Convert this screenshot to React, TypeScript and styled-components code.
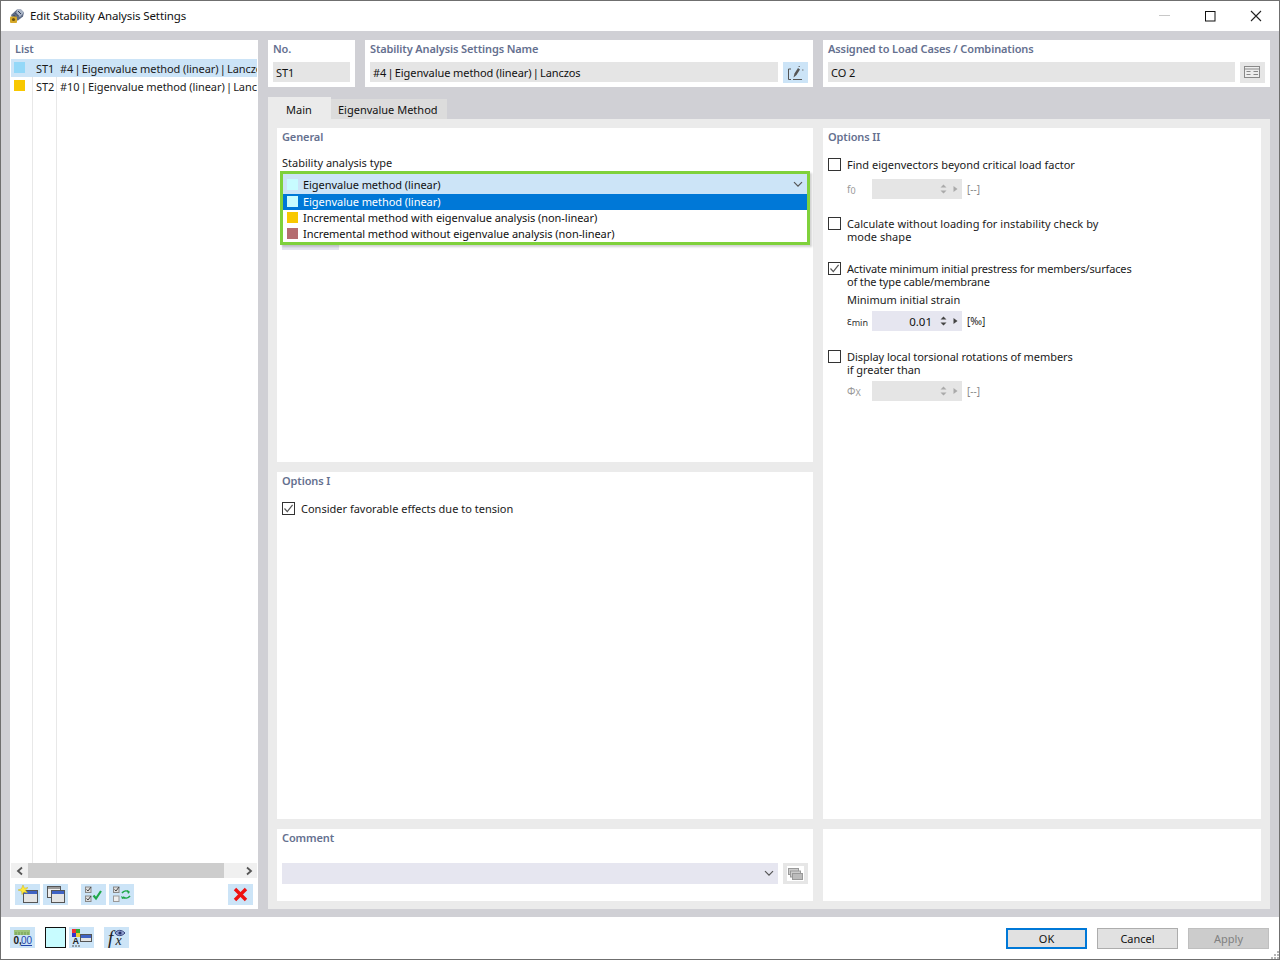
import React from "react";
import styled, { createGlobalStyle } from "styled-components";

const Global = createGlobalStyle`
  html, body { margin: 0; padding: 0; background: #fff; }
  body { font-family: "Noto Sans", "Open Sans", sans-serif; font-size: 11px; color: #1a1a1a; }
  * { box-sizing: border-box; }
`;

const Window = styled.div`
  width: 1280px; height: 960px; display: flex; flex-direction: column;
  border: 1px solid #6f6f6f; background: #fff; overflow: hidden;
`;
const TitleBar = styled.header`
  height: 30px; flex: none; display: flex; align-items: center; padding-left: 7px; background: #fff;
`;
const TitleText = styled.div`font-size: 11.5px; color: #111; flex: 1; letter-spacing: -0.12px; margin-left: 5px; margin-top: -1px;`;
const WinBtn = styled.div`width: 46px; height: 30px; display: flex; align-items: center; justify-content: center;`;
const Main = styled.main`
  flex: 1; background: #d0d0d5; display: grid; grid-template-columns: 248px 1002px; gap: 10px; padding: 9px 9px 8px 9px; min-height: 0;
`;
const ListPanel = styled.section`
  background: #fff; display: flex; flex-direction: column; min-height: 0; padding: 1px 1px 4px 1px;
`;
const Heading = styled.div`
  font-size: 11px; font-weight: 600; color: #65708f; line-height: 15px; height: 15px; letter-spacing: -0.12px;
`;
const ListHeading = styled(Heading)`padding-left: 4px; height: 18px;`;
const ListBody = styled.div`
  flex: 1; min-height: 0; overflow: hidden;
  background-image: linear-gradient(#e8e8e8, #e8e8e8), linear-gradient(#e8e8e8, #e8e8e8);
  background-size: 1px 100%, 1px 100%; background-position: 21px 0, 45px 0; background-repeat: no-repeat;
`;
const ListRow = styled.div<{ $sel?: boolean }>`
  height: 18px; display: flex; align-items: center; white-space: nowrap; overflow: hidden; letter-spacing: -0.08px;
  background: ${p => (p.$sel ? "#cce4f7" : "transparent")};
`;
const Swatch = styled.span<{ $c: string }>`
  display: block; flex: none; width: 11px; height: 11px; background: ${p => p.$c};
`;
const ListSw = styled(Swatch)`margin: -2px 11px 0 3px;`;
const ListNo = styled.span`width: 24px; flex: none;`;
const Pipe = styled.span`margin: 0 -1.5px;`;
const Scroll = styled.div`
  height: 15px; flex: none; background: #f0f0f0; display: flex; align-items: center;
`;
const ScrollBtn = styled.div`width: 17px; height: 15px; display: flex; align-items: center; justify-content: center; flex: none;`;
const ScrollThumb = styled.div`width: 196px; height: 15px; background: #cdcdcd;`;
const ScrollRest = styled.div`flex: 1;`;
const ListTools = styled.div`
  flex: none; height: 21px; margin-top: 6px; padding: 0 4px; display: flex; align-items: center; gap: 3px;
`;
const IconBtn = styled.div<{ $dis?: boolean }>`
  width: 25px; height: 21px; flex: none; display: flex; align-items: center; justify-content: center;
  background: ${p => (p.$dis ? "#e6e6e6" : "#cce4f7")};
`;
const Spacer = styled.div<{ $w: number }>`width: ${p => p.$w}px; flex: none;`;
const Grow = styled.div`flex: 1;`;

const Right = styled.div`display: flex; flex-direction: column; min-height: 0;`;
const TopRow = styled.div`display: grid; grid-template-columns: 87px 448px 447px; gap: 10px; height: 47px; flex: none;`;
const TopCard = styled.div`background: #fff; padding: 1px 5px 0 5px; display: flex; flex-direction: column;`;
const TopFieldRow = styled.div`display: flex; gap: 5px; margin-top: 6px; align-items: flex-start;`;
const TextField = styled.div`
  flex: 1; height: 20px; background: #e5e5e5; display: flex; align-items: center; padding-left: 3px; white-space: nowrap; color: #111; letter-spacing: -0.08px;
`;
const Tabs = styled.div`display: flex; align-items: flex-end; margin-top: 10px; height: 22px; flex: none;`;
const Tab = styled.div<{ $on?: boolean }>`
  display: flex; align-items: center; color: #111;
  height: ${p => (p.$on ? 22 : 20)}px;
  width: ${p => (p.$on ? 63 : 116)}px;
  padding: ${p => (p.$on ? "3px 0 0 18px" : "0 0 0 7px")};
  background: ${p => (p.$on ? "#ebebeb" : "#dcdcdc")};
`;
const TabBody = styled.div`
  flex: 1; background: #ebebeb; padding: 9px 9px 8px 9px; display: grid; min-height: 0; gap: 10px;
  grid-template-columns: 536px 438px; grid-template-rows: 334px 347px 72px;
`;
const Panel = styled.section<{ $span?: number }>`
  background: #fff; padding: 1px 5px 0 5px; display: flex; flex-direction: column; position: relative; min-height: 0;
  ${p => (p.$span ? `grid-row: span ${p.$span};` : "")}
`;
const FieldLabel = styled.div`line-height: 15px; height: 15px; margin-top: 11px; color: #1a1a1a;`;
const Under = styled.div`height: 20px; width: 57px; margin-top: 60px; background: #e6e6f0;`;
const DropFrame = styled.div`
  position: absolute; left: 3px; top: 43px; width: 530px; height: 74px; border: 3px solid #7fd13b; background: #fff;
  box-shadow: 2px 2px 2px rgba(0,0,0,.18); display: flex; flex-direction: column; letter-spacing: -0.05px;
`;
const DropHead = styled.div`
  height: 20px; flex: none; background: #cce4f7; display: flex; align-items: center; padding: 1px 4px 0 4px; gap: 5px; color: #111;
`;
const DropItem = styled.div<{ $on?: boolean }>`
  height: 16px; flex: none; display: flex; align-items: center; padding: 0 4px 1px 4px; gap: 5px;
  background: ${p => (p.$on ? "#0078d7" : "#fff")}; color: ${p => (p.$on ? "#fff" : "#111")};
`;
const CheckRow = styled.div<{ $mt: number }>`
  display: flex; margin-top: ${p => p.$mt}px; gap: 6px; line-height: 13px;
`;
const Box = styled.div`
  width: 13px; height: 13px; flex: none; border: 1px solid #333; background: #fff; display: flex; align-items: center; justify-content: center;
`;
const CheckText = styled.div<{ $ls?: number }>`white-space: pre-line; color: #1a1a1a; letter-spacing: ${p => p.$ls ?? 0}px;`;
const Indented = styled.div<{ $mt: number }>`margin-left: 19px; margin-top: ${p => p.$mt}px; line-height: 15px; height: 15px;`;
const SpinRow = styled.div<{ $mt: number }>`
  display: flex; align-items: center; margin-top: ${p => p.$mt}px; margin-left: 19px; height: 20px;
`;
const SpinSym = styled.div<{ $dis?: boolean }>`width: 25px; flex: none; color: ${p => (p.$dis ? "#999" : "#333")}; font-size: 10px; white-space: nowrap;`;
const Sub = styled.span`font-size: 9px; position: relative; top: 1px;`;
const Spin = styled.div<{ $dis?: boolean }>`
  width: 90px; height: 20px; flex: none; background: ${p => (p.$dis ? "#e5e5e5" : "#e6e6f0")}; display: flex; align-items: center; justify-content: flex-end; color: #111;
`;
const SpinVal = styled.div`margin-right: 8px; font-size: 11.5px;`;
const SpinArrows = styled.div`width: 20px; flex: none; display: flex; align-items: center; margin-right: 2px;`;
const Unit = styled.div<{ $dis?: boolean }>`margin-left: 5px; font-size: 10px; color: ${p => (p.$dis ? "#888" : "#222")};`;
const CommentRow = styled.div`display: flex; gap: 5px; margin-top: 18px; align-items: center;`;
const CommentSelect = styled.div`
  width: 496px; height: 21px; background: #e6e6f0; display: flex; align-items: center; justify-content: flex-end; padding-right: 4px;
`;
const Footer = styled.footer`
  height: 42px; flex: none; background: #fff; display: flex; align-items: flex-start; padding: 10px 10px 0 9px; position: relative;
`;
const ColorWell = styled.div`width: 21px; height: 21px; border: 1px solid #111; background: #c8fcff; flex: none;`;
const DlgBtn = styled.div<{ $kind?: "def" | "dis" }>`
  width: 81px; height: 21px; flex: none; display: flex; align-items: center; justify-content: center; margin: 1px 0 0 10px;
  background: ${p => (p.$kind === "dis" ? "#cccccc" : "#e1e1e1")};
  color: ${p => (p.$kind === "dis" ? "#808080" : "#111")};
  border: ${p => (p.$kind === "def" ? "2px solid #0078d7" : p.$kind === "dis" ? "1px solid #bfbfbf" : "1px solid #adadad")};
`;
const Grip = styled.svg`position: absolute; right: 0; bottom: 0;`;

const Arrows = ({ c }: { c: string }) => (
  <svg width="20" height="14" viewBox="0 0 20 14">
    <path d="M0.500 5.500 3.500 2.500 6.500 5.500ZM0.500 8.500 3.500 11.500 6.500 8.500Z" fill={c} />
    <path d="M13.500 4v6l4-3Z" fill={c} />
  </svg>
);
const Chevron = () => (
  <svg width="10" height="7" viewBox="0 0 10 7"><path d="M1 1.200 5 5.200l4-4" fill="none" stroke="#555" strokeWidth="1.200" /></svg>
);
const Check = () => (
  <svg width="11" height="11" viewBox="0 0 11 11"><path d="M1.500 5.500 4.300 8.600 9.600 1.800" fill="none" stroke="#555" strokeWidth="1.200" /></svg>
);
const AppIcon = () => (
  <svg width="17" height="16" viewBox="0 0 17 16">
    <path d="M3 7 9 1.500h4l3 3-1 4-5 4H5Z" fill="#5f6c86" />
    <path d="M9 1.500 13 1.500 16 4.500 12 9 8 6Z" fill="#a9b4c6" />
    <path d="M10 3l3 3M7.500 5l3 3M5.500 7l3 3" stroke="#2e3a55" strokeWidth="1" />
    <rect x="2" y="8.500" width="7" height="6.500" rx="1" fill="#d6a92a" />
    <circle cx="5.500" cy="11.500" r="1.600" fill="#6b5310" />
  </svg>
);
const Win = ({ x, y, w = 14, h = 12 }: { x: number; y: number; w?: number; h?: number }) => (
  <g>
    <rect x={x + 0.5} y={y + 0.5} width={w} height={h} fill="#e4e4e4" stroke="#555" />
    <rect x={x + 1} y={y + 1} width={w - 1} height={3} fill="#3f62c4" />
  </g>
);
const NewIcon = () => (
  <svg width="22" height="19" viewBox="0 0 22 19">
    <Win x={6} y={5} />
    <path d="M6 0l1.400 3.200L11 2.600 8.400 5l2 3-3.400-1-2 2.600-.4-3.400L1 5l3.400-1.200Z" fill="#ffe93b" stroke="#c9b21a" strokeWidth=".5" />
  </svg>
);
const CopyIcon = () => (
  <svg width="22" height="19" viewBox="0 0 22 19">
    <rect x="2.500" y="1.500" width="13" height="11" fill="#eee" stroke="#555" />
    <rect x="3" y="2" width="12" height="2" fill="#999" />
    <Win x={6} y={5} w={13} h={12} />
  </svg>
);
const CheckBoxes = () => (
  <>
    <rect x="1.500" y="2" width="5.500" height="5.500" fill="#ddd" stroke="#888" />
    <path d="M2.500 4.500l1.500 1.500 3-4" fill="none" stroke="#444" />
  </>
);
const CheckAllIcon = () => (
  <svg width="20" height="19" viewBox="0 0 20 19">
    <CheckBoxes />
    <g transform="translate(0 9)"><CheckBoxes /></g>
    <path d="M9.500 10.500l2.500 3 5-7.500" fill="none" stroke="#1fa84a" strokeWidth="2.200" />
  </svg>
);
const SwapIcon = () => (
  <svg width="20" height="19" viewBox="0 0 20 19">
    <CheckBoxes />
    <rect x="1.500" y="11" width="5.500" height="5.500" fill="#eee" stroke="#999" />
    <path d="M10 8c2-2.500 5-2.500 7-1M18 11c-2 2.500-5 2.500-7 1" fill="none" stroke="#1fa84a" strokeWidth="1.600" />
    <path d="M15 5l3 2-2 2M9 11l1 3 3-1" fill="#1fa84a" />
  </svg>
);
const RedX = () => (
  <svg width="15" height="15" viewBox="0 0 15 15"><path d="M2 2l11 11M13 2 2 13" stroke="#ee1111" strokeWidth="3.400" /></svg>
);
const EditIcon = () => (
  <svg width="20" height="16" viewBox="0 0 20 16">
    <path d="M5 4H2.500v10.500H5M7 14.500h9" fill="none" stroke="#555" />
    <path d="M7.500 12.500l1-4L12 3l2 1.500-3.500 5.500Z" fill="#555" />
    <path d="M12.500 1.500h1.500M16 5h1.500" stroke="#777" />
  </svg>
);
const PickIcon = () => (
  <svg width="18" height="13" viewBox="0 0 18 13">
    <rect x=".5" y=".5" width="15" height="11" fill="#eee" stroke="#888" />
    <path d="M1 3h14" stroke="#888" />
    <path d="M2.500 5.500h4M2.500 8.500h4M9.500 5.500h4.500M9.500 8.500h4.500" stroke="#888" />
  </svg>
);
const CommentIcon = () => (
  <svg width="17" height="15" viewBox="0 0 17 15">
    <rect x="0" y="0" width="17" height="15" fill="#fff" />
    <rect x="1.500" y="2.500" width="10" height="6" fill="#ccc" stroke="#999" />
    <rect x="3.500" y="5" width="10" height="6" fill="#ccc" stroke="#999" />
    <rect x="5.500" y="7.500" width="10" height="6" fill="#bbb" stroke="#999" />
  </svg>
);
const NumIcon = () => (
  <svg width="20" height="18" viewBox="0 0 20 18">
    <rect x="1" y="1" width="16" height="5" fill="#9cc47c" />
    <path d="M3 3v3M6 3v3M9 3v3M12 3v3M15 3v3" stroke="#6f9a52" />
    <text x="0.500" y="14.500" fontFamily="Liberation Sans" fontSize="10" fontWeight="700" fill="#222">0,</text>
    <text x="8" y="14.500" fontFamily="Liberation Sans" fontSize="10" fill="#2244aa">00</text>
    <path d="M8 16.500h11" stroke="#2244aa" />
  </svg>
);
const ColorTextIcon = () => (
  <svg width="21" height="19" viewBox="0 0 21 19">
    <rect x="1" y="1" width="4" height="4" fill="#e33" />
    <rect x="5" y="1" width="4" height="4" fill="#3a3" />
    <rect x="1" y="5" width="4" height="4" fill="#33c" />
    <rect x="5" y="5" width="4" height="4" fill="#ec3" />
    <text x="1.500" y="16" fontFamily="Liberation Sans" fontSize="9" fontWeight="700" fill="#222">A</text>
    <path d="M1 18h8" stroke="#555" strokeDasharray="2 1" />
    <Win x={9} y={6} w={11} h={7} />
  </svg>
);
const FormulaIcon = () => (
  <svg width="22" height="20" viewBox="0 0 22 20">
    <text x="2" y="16" fontFamily="Liberation Serif" fontStyle="italic" fontSize="19" fill="#222">f</text>
    <text x="9.500" y="17" fontFamily="Liberation Serif" fontStyle="italic" fontSize="14" fill="#222">x</text>
    <path d="M9 5c2-3.500 7-3.500 10 0-3 3.500-8 3.500-10 0Z" fill="#8f9fd0" stroke="#39467f" />
    <circle cx="14" cy="5" r="1.600" fill="#243066" />
  </svg>
);
const ArrowGlyph = ({ dir }: { dir: "l" | "r" }) => (
  <svg width="8" height="10" viewBox="0 0 8 10">
    <path d={dir === "l" ? "M6 1.500 2 5l4 3.500" : "M2 1.500 6 5 2 8.500"} fill="none" stroke="#555" strokeWidth="1.800" />
  </svg>
);

const App = () => (
  <Window>
    <Global />
    <TitleBar>
      <AppIcon />
      <TitleText>Edit Stability Analysis Settings</TitleText>
      <WinBtn><svg width="11" height="2"><path d="M0 .5h11" stroke="#c8c8c8" /></svg></WinBtn>
      <WinBtn><svg width="11" height="11"><rect x=".5" y=".5" width="9.500" height="9.500" fill="none" stroke="#111" /></svg></WinBtn>
      <WinBtn><svg width="12" height="12"><path d="M1 1l10 10M11 1 1 11" stroke="#222" strokeWidth="1.100" /></svg></WinBtn>
    </TitleBar>
    <Main>
      <ListPanel>
        <ListHeading>List</ListHeading>
        <ListBody>
          <ListRow $sel><ListSw $c="#94d8f8" /><ListNo>ST1</ListNo><span>#4 <Pipe>|</Pipe> Eigenvalue method (linear) <Pipe>|</Pipe> Lanczos</span></ListRow>
          <ListRow><ListSw $c="#f8c800" /><ListNo>ST2</ListNo><span>#10 <Pipe>|</Pipe> Eigenvalue method (linear) <Pipe>|</Pipe> Lanczos</span></ListRow>
        </ListBody>
        <Scroll>
          <ScrollBtn><ArrowGlyph dir="l" /></ScrollBtn>
          <ScrollThumb />
          <ScrollRest />
          <ScrollBtn><ArrowGlyph dir="r" /></ScrollBtn>
        </Scroll>
        <ListTools>
          <IconBtn><NewIcon /></IconBtn>
          <IconBtn><CopyIcon /></IconBtn>
          <Spacer $w={7} />
          <IconBtn><CheckAllIcon /></IconBtn>
          <IconBtn><SwapIcon /></IconBtn>
          <Grow />
          <IconBtn><RedX /></IconBtn>
        </ListTools>
      </ListPanel>
      <Right>
        <TopRow>
          <TopCard>
            <Heading>No.</Heading>
            <TopFieldRow><TextField>ST1</TextField></TopFieldRow>
          </TopCard>
          <TopCard>
            <Heading>Stability Analysis Settings Name</Heading>
            <TopFieldRow>
              <TextField><span>#4 <Pipe>|</Pipe> Eigenvalue method (linear) <Pipe>|</Pipe> Lanczos</span></TextField>
              <IconBtn><EditIcon /></IconBtn>
            </TopFieldRow>
          </TopCard>
          <TopCard>
            <Heading>Assigned to Load Cases / Combinations</Heading>
            <TopFieldRow>
              <TextField>CO 2</TextField>
              <IconBtn $dis><PickIcon /></IconBtn>
            </TopFieldRow>
          </TopCard>
        </TopRow>
        <Tabs>
          <Tab $on>Main</Tab>
          <Tab>Eigenvalue Method</Tab>
        </Tabs>
        <TabBody>
          <Panel>
            <Heading>General</Heading>
            <FieldLabel>Stability analysis type</FieldLabel>
            <Under />
            <DropFrame>
              <DropHead><Swatch $c="#c8fcff" />Eigenvalue method (linear)<Grow /><Chevron /></DropHead>
              <DropItem $on><Swatch $c="#c8fcff" />Eigenvalue method (linear)</DropItem>
              <DropItem><Swatch $c="#f8c800" />Incremental method with eigenvalue analysis (non-linear)</DropItem>
              <DropItem><Swatch $c="#b56d70" />Incremental method without eigenvalue analysis (non-linear)</DropItem>
            </DropFrame>
          </Panel>
          <Panel $span={2}>
            <Heading>Options II</Heading>
            <CheckRow $mt={14}><Box /><CheckText>Find eigenvectors beyond critical load factor</CheckText></CheckRow>
            <SpinRow $mt={8}>
              <SpinSym $dis>f<Sub>0</Sub></SpinSym>
              <Spin $dis><SpinArrows><Arrows c="#aaa" /></SpinArrows></Spin>
              <Unit $dis>[--]</Unit>
            </SpinRow>
            <CheckRow $mt={18}><Box /><CheckText $ls={0.04}>{"Calculate without loading for instability check by\nmode shape"}</CheckText></CheckRow>
            <CheckRow $mt={19}><Box><Check /></Box><CheckText $ls={-0.16}>{"Activate minimum initial prestress for members/surfaces\nof the type cable/membrane"}</CheckText></CheckRow>
            <Indented $mt={4}>Minimum initial strain</Indented>
            <SpinRow $mt={4}>
              <SpinSym>ε<Sub>min</Sub></SpinSym>
              <Spin><SpinVal>0.01</SpinVal><SpinArrows><Arrows c="#444" /></SpinArrows></Spin>
              <Unit>[‰]</Unit>
            </SpinRow>
            <CheckRow $mt={19}><Box /><CheckText $ls={-0.05}>{"Display local torsional rotations of members\nif greater than"}</CheckText></CheckRow>
            <SpinRow $mt={5}>
              <SpinSym $dis>Φ<Sub>X</Sub></SpinSym>
              <Spin $dis><SpinArrows><Arrows c="#aaa" /></SpinArrows></Spin>
              <Unit $dis>[--]</Unit>
            </SpinRow>
          </Panel>
          <Panel>
            <Heading>Options I</Heading>
            <CheckRow $mt={14}><Box><Check /></Box><CheckText>Consider favorable effects due to tension</CheckText></CheckRow>
          </Panel>
          <Panel>
            <Heading>Comment</Heading>
            <CommentRow>
              <CommentSelect><Chevron /></CommentSelect>
              <IconBtn $dis><CommentIcon /></IconBtn>
            </CommentRow>
          </Panel>
          <Panel />
        </TabBody>
      </Right>
    </Main>
    <Footer>
      <IconBtn><NumIcon /></IconBtn>
      <Spacer $w={10} />
      <ColorWell />
      <Spacer $w={3} />
      <IconBtn><ColorTextIcon /></IconBtn>
      <Spacer $w={10} />
      <IconBtn><FormulaIcon /></IconBtn>
      <Grow />
      <DlgBtn $kind="def">OK</DlgBtn>
      <DlgBtn>Cancel</DlgBtn>
      <DlgBtn $kind="dis">Apply</DlgBtn>
      <Grip width="8" height="8" viewBox="0 0 8 8">
        <path d="M6 0h2v2H6ZM3 3h2v2H3ZM6 3h2v2H6ZM0 6h2v2H0ZM3 6h2v2H3ZM6 6h2v2H6Z" fill="#b5b5b5" />
      </Grip>
    </Footer>
  </Window>
);

export default App;
